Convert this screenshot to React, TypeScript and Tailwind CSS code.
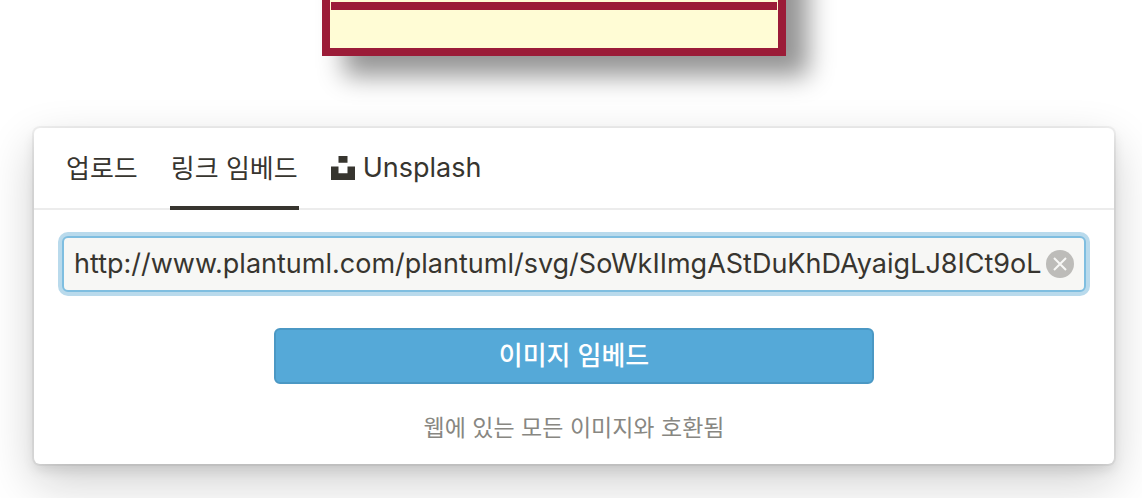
import { useState } from 'react';

const initialUrl =
  'http://www.plantuml.com/plantuml/svg/SoWkIImgAStDuKhDAyaigLJ8ICt9oL';

function UnsplashIcon() {
  return (
    <svg viewBox="0 0 24 24" className="size-6" fill="currentColor" aria-hidden="true">
      <path d="M7.5 0h9v6.75h-9zM16.5 10.5H24V24H0V10.5h7.5v6.75h9z" />
    </svg>
  );
}

// Lower end of the class box, the rest is scrolled out of view.
function DiagramPreview() {
  return (
    <div className="flex h-32 flex-col items-center justify-end overflow-hidden pr-[34px] pb-[72px]">
      <div className="flex h-80 w-[464px] shrink-0 flex-col justify-end border-8 border-[#9b1c38] bg-[#fffcd5] shadow-[22px_20px_24px_#959595]">
        <div className="mx-px mb-[38px] h-2 bg-[#9b1c38]" />
      </div>
    </div>
  );
}

function Tabs() {
  return (
    <div role="tablist" className="flex h-[82px] gap-8 border-b-2 border-[#ececec] px-8 text-[26px]">
      <button role="tab" aria-selected="false" className="pt-0.5">
        업로드
      </button>
      <button role="tab" aria-selected="true" className="-mb-0.5 border-y-4 border-t-transparent border-b-[#37352f] px-px">
        링크 임베드
      </button>
      <button role="tab" aria-selected="false" className="flex items-center gap-2">
        <UnsplashIcon />
        <span className="text-[27px]">Unsplash</span>
      </button>
    </div>
  );
}

export default function App() {
  const [url, setUrl] = useState(initialUrl);

  return (
    <div className="min-h-screen overflow-hidden bg-white font-['Inter','Noto_Sans_CJK_KR',sans-serif] text-[27px] leading-8 text-[#37352f]">
      <DiagramPreview />
      <div className="relative mr-7 mb-[34px] ml-[34px] rounded-md bg-white shadow-[0_0_0_2px_rgba(15,15,15,0.05),0_6px_12px_rgba(15,15,15,0.1),0_18px_48px_rgba(15,15,15,0.2)]">
        <Tabs />
        <form
          className="flex flex-col items-center px-7 pt-[26px] pb-5"
          onSubmit={(e) => e.preventDefault()}
        >
          <div className="flex h-14 w-full items-center rounded-md border-2 border-[#7fbee0] bg-[#f7f7f5] px-2.5 ring-4 ring-[#b9daec]">
            <input
              type="text"
              aria-label="이미지 링크"
              value={url}
              onChange={(e) => setUrl(e.target.value)}
              className="min-w-0 flex-1 bg-transparent outline-none"
            />
            <button
              type="button"
              aria-label="지우기"
              onClick={() => setUrl('')}
              className="flex size-7 items-center justify-center rounded-full bg-[#bdbcb9] text-[#f7f7f5]"
            >
              <svg viewBox="0 0 14 14" className="size-3.5" stroke="currentColor" strokeWidth="2" aria-hidden="true">
                <path d="M1 1l12 12M13 1L1 13" />
              </svg>
            </button>
          </div>
          <button
            type="submit"
            className="mt-9 h-14 w-[600px] max-w-full rounded-md border-2 border-[#4b98c4] bg-[#55a9d8] text-[26px] font-medium text-white"
          >
            이미지 임베드
          </button>
          <p className="mt-7 text-[23px] text-[#888782]">웹에 있는 모든 이미지와 호환됨</p>
        </form>
      </div>
    </div>
  );
}
